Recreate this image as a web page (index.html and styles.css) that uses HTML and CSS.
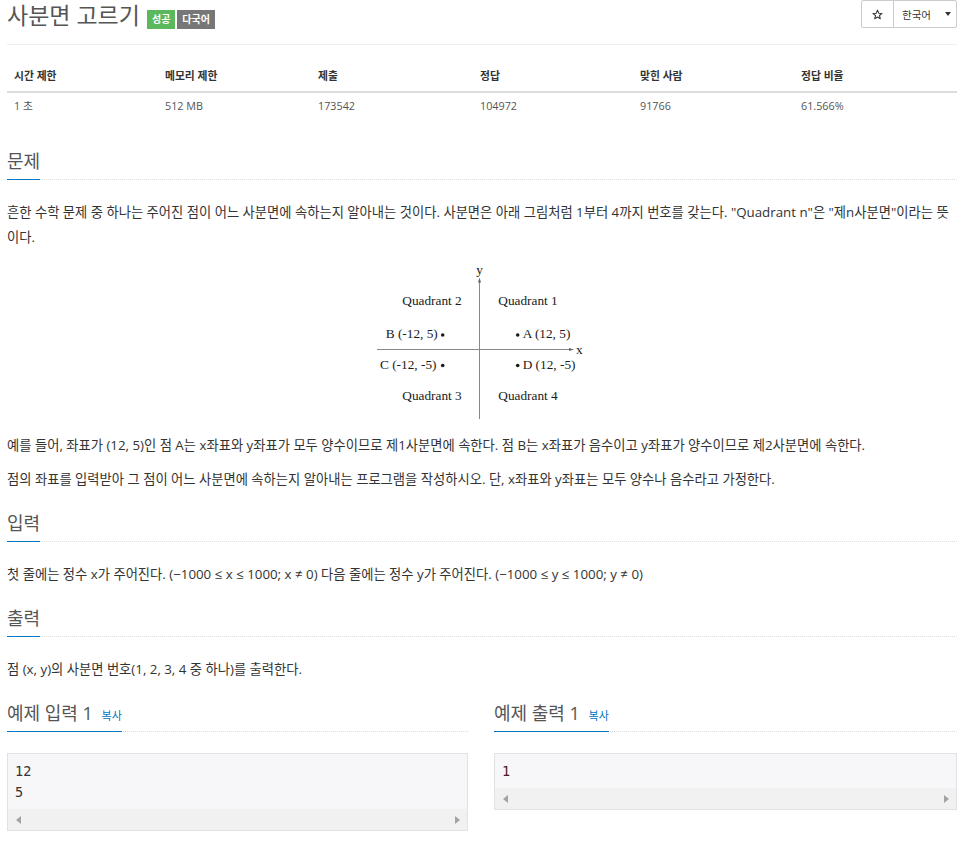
FILE: index.html
```html
<!DOCTYPE html>
<html lang="ko">
<head>
<meta charset="utf-8">
<title>사분면 고르기</title>
<link rel="stylesheet" href="styles.css">
</head>
<body>
<div class="page">
  <div class="page-header">
    <h1 class="title">사분면 고르기<span class="label label-success">성공</span><span class="label label-default">다국어</span></h1>
    <div class="btn-group">
      <button class="btn btn-star" type="button"><svg class="star-icon" width="11" height="11" viewBox="0 0 24 24"><polygon points="12,2.5 14.8,9.2 22,9.6 16.4,14.2 18.2,21.3 12,17.4 5.8,21.3 7.6,14.2 2,9.6 9.2,9.2" fill="none" stroke="#333" stroke-width="2.2" stroke-linejoin="round"/></svg></button>
      <button class="btn btn-lang" type="button">한국어<span class="caret"></span></button>
    </div>
  </div>

  <table class="problem-info">
    <thead>
      <tr><th>시간 제한</th><th>메모리 제한</th><th>제출</th><th>정답</th><th>맞힌 사람</th><th>정답 비율</th></tr>
    </thead>
    <tbody>
      <tr><td>1 초</td><td>512 MB</td><td>173542</td><td>104972</td><td>91766</td><td>61.566%</td></tr>
    </tbody>
  </table>

  <section class="problem-section first">
    <div class="headline"><h2>문제</h2></div>
    <div class="problem-text">
      <p>흔한 수학 문제 중 하나는 주어진 점이 어느 사분면에 속하는지 알아내는 것이다. 사분면은 아래 그림처럼 1부터 4까지 번호를 갖는다. "Quadrant n"은 "제n사분면"이라는 뜻이다.</p>
      <p class="figure">
        <svg class="quadrant" width="230" height="164" viewBox="0 0 230 164">
          <line class="axis" x1="112.5" y1="22" x2="112.5" y2="160"/>
          <line class="axis" x1="10" y1="90.5" x2="203" y2="90.5"/>
          <polygon class="arrow" points="112.5,18.5 111,23.5 114,23.5"/>
          <polygon class="arrow" points="207,90.5 202,89 202,92"/>
          <text x="112.5" y="15" text-anchor="middle">y</text>
          <text x="209" y="95">x</text>
          <text x="35.3" y="46">Quadrant 2</text>
          <text x="131.3" y="46">Quadrant 1</text>
          <text x="18.7" y="79">B (-12, 5)</text>
          <circle cx="75.7" cy="76" r="1.8"/>
          <circle cx="150.7" cy="76" r="1.8"/>
          <text x="155.7" y="79">A (12, 5)</text>
          <text x="13" y="109.5">C (-12, -5)</text>
          <circle cx="75.7" cy="106.5" r="1.8"/>
          <circle cx="150.7" cy="106.5" r="1.8"/>
          <text x="155.7" y="109.5">D (12, -5)</text>
          <text x="35.3" y="141">Quadrant 3</text>
          <text x="131.3" y="141">Quadrant 4</text>
        </svg>
      </p>
      <p>예를 들어, 좌표가 (12, 5)인 점 A는 x좌표와 y좌표가 모두 양수이므로 제1사분면에 속한다. 점 B는 x좌표가 음수이고 y좌표가 양수이므로 제2사분면에 속한다.</p>
      <p>점의 좌표를 입력받아 그 점이 어느 사분면에 속하는지 알아내는 프로그램을 작성하시오. 단, x좌표와 y좌표는 모두 양수나 음수라고 가정한다.</p>
    </div>
  </section>

  <section class="problem-section">
    <div class="headline"><h2>입력</h2></div>
    <div class="problem-text">
      <p>첫 줄에는 정수 x가 주어진다. (−1000 ≤ x ≤ 1000; x ≠ 0) 다음 줄에는 정수 y가 주어진다. (−1000 ≤ y ≤ 1000; y ≠ 0)</p>
    </div>
  </section>

  <section class="problem-section">
    <div class="headline"><h2>출력</h2></div>
    <div class="problem-text">
      <p>점 (x, y)의 사분면 번호(1, 2, 3, 4 중 하나)를 출력한다.</p>
    </div>
  </section>

  <div class="samples">
    <section class="problem-section sample">
      <div class="headline"><h2>예제 입력 1 <a class="copy">복사</a></h2></div>
      <div class="sample-box">
        <pre class="sample-data">12
5</pre>
        <div class="scrollbar"><span class="sb-arrow sb-left"></span><span class="sb-arrow sb-right"></span></div>
      </div>
    </section>
    <section class="problem-section sample">
      <div class="headline"><h2>예제 출력 1 <a class="copy">복사</a></h2></div>
      <div class="sample-box">
        <pre class="sample-data output">1</pre>
        <div class="scrollbar"><span class="sb-arrow sb-left"></span><span class="sb-arrow sb-right"></span></div>
      </div>
    </section>
  </div>
</div>
</body>
</html>
```

FILE: styles.css
```css
* { box-sizing: border-box; }

html, body {
  margin: 0;
  padding: 0;
  background: #fff;
}

body {
  font-family: "Open Sans", "Noto Sans CJK KR", sans-serif;
  color: #333;
  font-size: 13.3px;
}

.page {
  width: 962px;
  padding: 0 5px 0 7px;
}

/* header */
.page-header {
  display: flex;
  justify-content: space-between;
  align-items: flex-start;
  height: 45px;
  border-bottom: 1px solid #eee;
}

.title {
  margin: 0;
  display: flex;
  align-items: flex-start;
  font-size: 23px;
  line-height: 30px;
  font-weight: 400;
  color: #555;
}

.label {
  margin-top: 10px;
  height: 19px;
  padding: 0 5px;
  font-size: 10px;
  line-height: 19px;
  font-weight: 700;
  color: #fff;
}

.label-success {
  background: #5cb85c;
  margin-left: 7px;
}

.label-default {
  background: #777;
  margin-left: 2px;
}

.btn-group {
  display: flex;
}

.btn {
  height: 28px;
  margin: 0;
  border: 1px solid #ccc;
  background: #fff;
  font-family: "Open Sans", "Noto Sans CJK KR", sans-serif;
  color: #333;
  padding: 0;
  display: flex;
  align-items: center;
}

.btn-star {
  width: 33px;
  justify-content: center;
  border-radius: 2px 0 0 2px;
}

.btn-lang {
  width: 64px;
  margin-left: -1px;
  padding-left: 8px;
  font-size: 10.5px;
  border-radius: 0 2px 2px 0;
}

.caret {
  margin-left: 14px;
  width: 0;
  height: 0;
  border-top: 4px solid #333;
  border-left: 3.5px solid transparent;
  border-right: 3.5px solid transparent;
}

/* info table */
.problem-info {
  width: 950px;
  margin-top: 15px;
  border-collapse: collapse;
  table-layout: fixed;
}

.problem-info th,
.problem-info td {
  text-align: left;
  padding: 0 7px;
  font-size: 10.8px;
}

.problem-info th {
  height: 32px;
  line-height: 16px;
  font-weight: 700;
  color: #333;
  border-bottom: 2px solid #ddd;
}

.problem-info td {
  height: 26px;
  line-height: 16px;
  color: #555;
}

.problem-info th:nth-child(1) { width: 151px; }
.problem-info th:nth-child(2) { width: 153px; }
.problem-info th:nth-child(3) { width: 162px; }
.problem-info th:nth-child(4) { width: 160px; }
.problem-info th:nth-child(5) { width: 161px; }
.problem-info th:nth-child(6) { width: 163px; }

/* sections */
.problem-section {
  margin-top: 20px;
}

.problem-section.first {
  margin-top: 32px;
}

.headline {
  border-bottom: 1px dotted #ddd;
  height: 30px;
}

.headline h2 {
  display: inline-block;
  margin: 0;
  padding-bottom: 7px;
  height: 30px;
  border-bottom: 1px solid #0076c0;
  font-size: 18px;
  line-height: 22px;
  font-weight: 400;
  color: #555;
}

.problem-text {
  margin-top: 20px;
}

.problem-text p {
  margin: 0 0 9px;
  line-height: 25px;
  color: #333;
}

.problem-text p:last-child {
  margin-bottom: 0;
}

.problem-text p.figure {
  margin-bottom: 10px;
  line-height: 0;
}

.quadrant {
  display: block;
  margin: 0 auto;
}

.quadrant text {
  font-family: "Liberation Serif", serif;
  font-size: 13.3px;
  fill: #1a1a1a;
}

.quadrant circle {
  fill: #1a1a1a;
}

.quadrant .axis {
  stroke: #888;
  stroke-width: 1;
}

.quadrant .arrow {
  fill: #666;
}

/* samples */
.samples {
  display: grid;
  grid-template-columns: 461px 463px;
  column-gap: 26px;
}

.copy {
  margin-left: 4px;
  font-size: 11px;
  color: #0076c0;
  text-decoration: none;
  cursor: pointer;
}

.sample-box {
  margin-top: 21px;
  border: 1px solid #e1e1e8;
  background: #f7f7f9;
}

.sample-data {
  margin: 0;
  padding: 7px 7px 6px;
  font-family: "DejaVu Sans Mono", "Liberation Mono", monospace;
  font-size: 13.5px;
  line-height: 21px;
  color: #333;
}

.sample-data.output {
  color: #4a1c1c;
}

.scrollbar {
  height: 21px;
  background: #f1f1f1;
  display: flex;
  justify-content: space-between;
  align-items: center;
  padding: 0 7px 0 8px;
}

.sb-arrow {
  width: 0;
  height: 0;
  border-top: 4px solid transparent;
  border-bottom: 4px solid transparent;
}

.sb-left {
  border-right: 5px solid #a3a3a3;
}

.sb-right {
  border-left: 5px solid #a3a3a3;
}
```
